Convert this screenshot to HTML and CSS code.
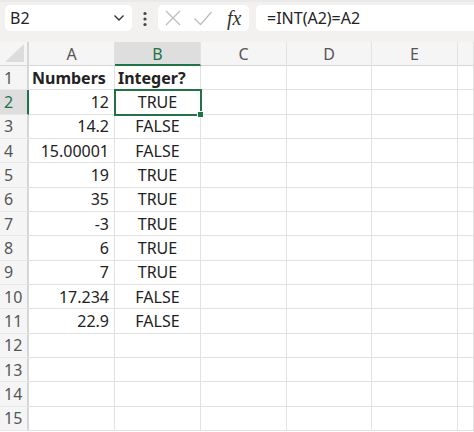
FILE: index.html
```html
<!DOCTYPE html>
<html lang="en">
<head>
    <meta charset="UTF-8">
    <title>INT check</title>
    <link rel="stylesheet" href="styles.css">
</head>
<body>
    <div class="toolbar">
        <div class="namebox">
            <span class="name">B2</span>
            <svg class="chevron" width="12" height="8" viewBox="0 0 12 8"><path d="M1.5 1.5 L6 6 L10.5 1.5" fill="none" stroke="#333" stroke-width="1.4"/></svg>
        </div>
        <div class="dots">
            <svg width="4" height="16" viewBox="0 0 4 16"><circle cx="2" cy="2.5" r="1.6" fill="#444"/><circle cx="2" cy="8" r="1.6" fill="#444"/><circle cx="2" cy="13.5" r="1.6" fill="#444"/></svg>
        </div>
        <div class="fxbox">
            <svg width="18" height="18" viewBox="0 0 18 18"><path d="M2 2 L16 16 M16 2 L2 16" stroke="#bdbdbd" stroke-width="1.3"/></svg>
            <svg width="20" height="18" viewBox="0 0 20 18"><path d="M1.5 9.5 L7.5 15.5 L18.5 3" fill="none" stroke="#bdbdbd" stroke-width="1.3"/></svg>
            <span class="fx">fx</span>
        </div>
        <div class="formula">=INT(A2)=A2</div>
    </div>

    <div class="sheet">
        <div class="corner"><span class="tri"></span></div>
        <div class="colhead">A</div>
        <div class="colhead active">B</div>
        <div class="colhead">C</div>
        <div class="colhead">D</div>
        <div class="colhead">E</div>
        <div class="colhead last"></div>

        <div class="rowhead">1</div>
        <div class="cell bold">Numbers</div>
        <div class="cell bold">Integer?</div>
        <div class="cell"></div><div class="cell"></div><div class="cell"></div><div class="cell"></div>

        <div class="rowhead active">2</div>
        <div class="cell num">12</div>
        <div class="cell mid selected">TRUE</div>
        <div class="cell"></div><div class="cell"></div><div class="cell"></div><div class="cell"></div>

        <div class="rowhead">3</div>
        <div class="cell num">14.2</div>
        <div class="cell mid">FALSE</div>
        <div class="cell"></div><div class="cell"></div><div class="cell"></div><div class="cell"></div>

        <div class="rowhead">4</div>
        <div class="cell num">15.00001</div>
        <div class="cell mid">FALSE</div>
        <div class="cell"></div><div class="cell"></div><div class="cell"></div><div class="cell"></div>

        <div class="rowhead">5</div>
        <div class="cell num">19</div>
        <div class="cell mid">TRUE</div>
        <div class="cell"></div><div class="cell"></div><div class="cell"></div><div class="cell"></div>

        <div class="rowhead">6</div>
        <div class="cell num">35</div>
        <div class="cell mid">TRUE</div>
        <div class="cell"></div><div class="cell"></div><div class="cell"></div><div class="cell"></div>

        <div class="rowhead">7</div>
        <div class="cell num">-3</div>
        <div class="cell mid">TRUE</div>
        <div class="cell"></div><div class="cell"></div><div class="cell"></div><div class="cell"></div>

        <div class="rowhead">8</div>
        <div class="cell num">6</div>
        <div class="cell mid">TRUE</div>
        <div class="cell"></div><div class="cell"></div><div class="cell"></div><div class="cell"></div>

        <div class="rowhead">9</div>
        <div class="cell num">7</div>
        <div class="cell mid">TRUE</div>
        <div class="cell"></div><div class="cell"></div><div class="cell"></div><div class="cell"></div>

        <div class="rowhead">10</div>
        <div class="cell num">17.234</div>
        <div class="cell mid">FALSE</div>
        <div class="cell"></div><div class="cell"></div><div class="cell"></div><div class="cell"></div>

        <div class="rowhead">11</div>
        <div class="cell num">22.9</div>
        <div class="cell mid">FALSE</div>
        <div class="cell"></div><div class="cell"></div><div class="cell"></div><div class="cell"></div>

        <div class="rowhead">12</div>
        <div class="cell"></div><div class="cell"></div><div class="cell"></div><div class="cell"></div><div class="cell"></div><div class="cell"></div>

        <div class="rowhead">13</div>
        <div class="cell"></div><div class="cell"></div><div class="cell"></div><div class="cell"></div><div class="cell"></div><div class="cell"></div>

        <div class="rowhead">14</div>
        <div class="cell"></div><div class="cell"></div><div class="cell"></div><div class="cell"></div><div class="cell"></div><div class="cell"></div>

        <div class="rowhead">15</div>
        <div class="cell"></div><div class="cell"></div><div class="cell"></div><div class="cell"></div><div class="cell"></div><div class="cell"></div>
    </div>
</body>
</html>
```

FILE: styles.css
```css
body {
    margin: 0;
    padding: 0;
    background-color: #fff;
    font-family: 'Noto Sans', 'Open Sans', sans-serif;
    font-size: 16px;
    color: #222;
    overflow: hidden;
}

.toolbar {
    display: flex;
    align-items: center;
    height: 42px;
    padding: 0 0 8px 5px;
    box-sizing: border-box;
    background-color: #f2f1f0;
    border-top: 2px solid #ebe9e7;
}

.namebox {
    display: flex;
    align-items: center;
    justify-content: space-between;
    width: 127px;
    height: 26px;
    box-sizing: border-box;
    padding: 0 7px 0 5px;
    background-color: #fff;
    border-radius: 5px;
}

.name {
    font-size: 16px;
    color: #222;
}

.dots {
    width: 26px;
    display: flex;
    justify-content: center;
    padding-top: 2px;
}

.fxbox {
    display: flex;
    align-items: center;
    gap: 11px;
    width: 91px;
    height: 26px;
    box-sizing: border-box;
    padding-left: 6px;
    background-color: #fff;
    border-radius: 5px;
}

.fx {
    font-family: 'Liberation Serif', serif;
    font-style: italic;
    font-size: 20px;
    color: #333;
    margin-left: 3px;
    line-height: 1;
}

.formula {
    flex: 1;
    height: 26px;
    margin-left: 7px;
    padding-left: 11px;
    line-height: 26px;
    background-color: #fff;
    border-radius: 5px 0 0 5px;
    color: #222;
}

.sheet {
    display: grid;
    grid-template-columns: 29px 86px 86px 86px 85px 86px 1fr;
    grid-template-rows: 24px repeat(15, 24.33px);
}

.corner, .colhead, .rowhead {
    background-color: #f5f5f5;
    color: #555;
    display: flex;
    align-items: center;
    justify-content: center;
    box-sizing: border-box;
}

.corner {
    position: relative;
    border-right: 2px solid #d6d6d6;
    border-bottom: 1px solid #d6d6d6;
}

.tri {
    position: absolute;
    right: 3px;
    bottom: 3px;
    width: 0;
    height: 0;
    border-left: 19px solid transparent;
    border-bottom: 18px solid #dcdcdc;
}

.colhead {
    border-right: 1px solid #e2e2e2;
    border-bottom: 1px solid #d6d6d6;
    padding-top: 1px;
}

.colhead.active {
    background-color: #dedede;
    color: #217346;
    border-bottom: 2px solid #217346;
}

.rowhead {
    border-right: 2px solid #d6d6d6;
    border-bottom: 1px solid #e8e8e8;
    justify-content: flex-start;
    padding-left: 4px;
    color: #555;
}

.rowhead.active {
    background-color: #dedede;
    color: #217346;
    border-right: 2px solid #217346;
}

.cell {
    border-right: 1px solid #e2e2e2;
    border-bottom: 1px solid #e2e2e2;
    box-sizing: border-box;
    display: flex;
    align-items: center;
    padding: 0 5px;
    white-space: nowrap;
    color: #222;
}

.cell.bold {
    font-weight: bold;
    padding-left: 3px;
}

.cell.num {
    justify-content: flex-end;
}

.cell.mid {
    justify-content: center;
}

.cell.selected {
    position: relative;
    outline: 2px solid #217346;
    outline-offset: -1px;
}

.cell.selected::after {
    content: '';
    position: absolute;
    right: -4px;
    bottom: -4px;
    width: 5px;
    height: 5px;
    background-color: #217346;
    border: 1px solid #fff;
}
```
